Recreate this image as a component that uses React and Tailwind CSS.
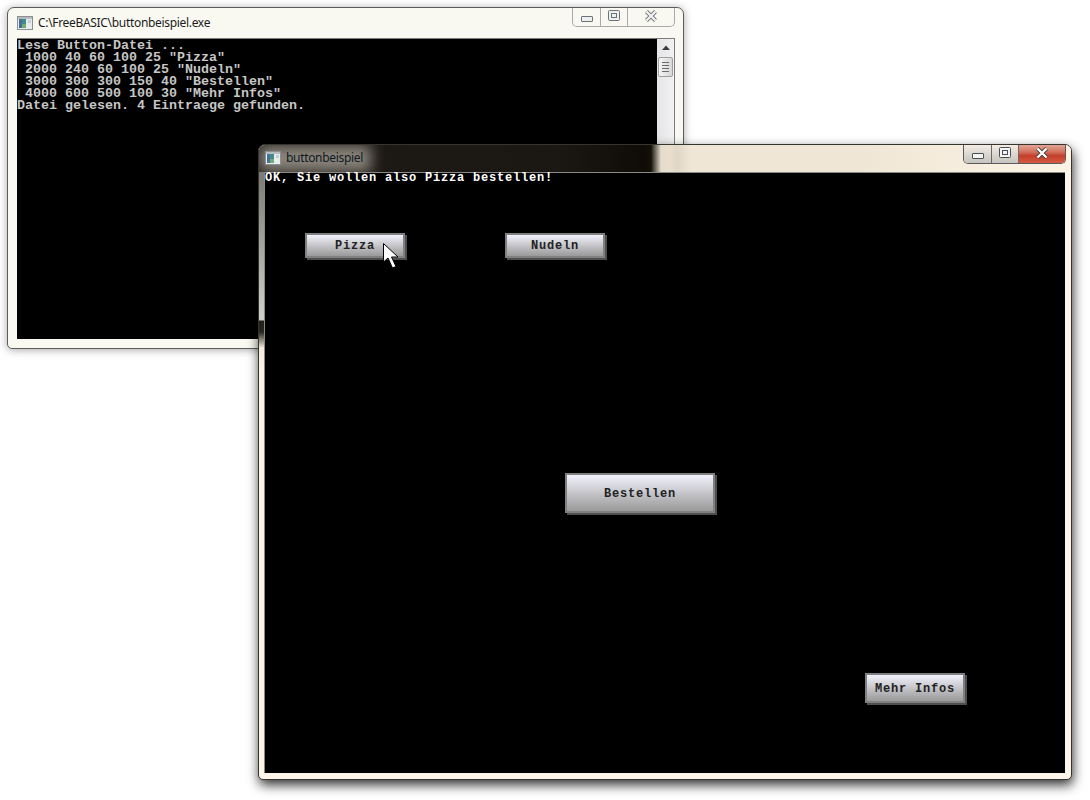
const CONSOLE_LINES = `Lese Button-Datei ...
 1000 40 60 100 25 "Pizza"
 2000 240 60 100 25 "Nudeln"
 3000 300 300 150 40 "Bestellen"
 4000 600 500 100 30 "Mehr Infos"
Datei gelesen. 4 Eintraege gefunden.`;

function WinIcon() {
  return (
    <svg width="16" height="14" viewBox="0 0 16 14" className="shrink-0">
      <rect x="0.5" y="0.5" width="15" height="13" fill="#e8ecec" stroke="#8a9094" />
      <rect x="1" y="1" width="14" height="2" fill="#b4bcc0" />
      <rect x="2" y="3" width="7" height="9" fill="#3f8c8a" />
      <rect x="2" y="3" width="3" height="9" fill="#4a6f96" />
      <rect x="5" y="8" width="4" height="4" fill="#72ad73" />
      <rect x="11" y="4" width="3" height="3" fill="#c4d0d4" />
    </svg>
  );
}

function CaptionButtons({ active }) {
  const glyph = active ? "#f4f4f4" : "#eef0f0";
  const edge = active ? "#4a4f55" : "#6c7278";
  return (
    <div
      className={`flex h-[19px] w-[103px] rounded-b-[5px] border border-t-0 ${
        active ? "border-[#5a5a5a]" : "border-[#a8aaa8]"
      }`}
    >
      <div
        className={`flex w-[28px] items-end justify-center rounded-bl-[4px] border-r pb-[4px] ${
          active
            ? "border-[#6a6a6a] bg-gradient-to-b from-[#f2ece2] to-[#c6c4c0]"
            : "border-[#a8aaa8]"
        }`}
      >
        <div className="h-[6px] w-[12px] rounded-[1px] border" style={{ background: glyph, borderColor: edge }} />
      </div>
      <div
        className={`flex w-[27px] items-start justify-center border-r pt-[2px] ${
          active
            ? "border-[#6a6a6a] bg-gradient-to-b from-[#f2ece2] to-[#c6c4c0]"
            : "border-[#a8aaa8]"
        }`}
      >
        <svg width="12" height="11" viewBox="0 0 12 11">
          <rect x="0.5" y="0.5" width="11" height="10" rx="1" fill={glyph} stroke={edge} />
          <rect x="3.5" y="3.5" width="5" height="4" fill="none" stroke={edge} />
        </svg>
      </div>
      <div
        className={`flex flex-1 items-start justify-center rounded-br-[4px] pt-[2px] ${
          active ? "bg-[linear-gradient(#e2a594_0%,#d2705c_40%,#c33f2a_60%,#d65a42_100%)]" : ""
        }`}
      >
        <svg width="14" height="12" viewBox="0 0 14 12">
          <path d="M2.5 1.5 L11.5 10.5 M11.5 1.5 L2.5 10.5" stroke={active ? "#3a3a3a" : "#6c7278"} strokeWidth="4" />
          <path d="M2.5 1.5 L11.5 10.5 M11.5 1.5 L2.5 10.5" stroke={active ? "#ffffff" : "#f2f2f0"} strokeWidth="2.4" />
        </svg>
      </div>
    </div>
  );
}

function Scrollbar() {
  return (
    <div className="flex w-[17px] shrink-0 flex-col items-center bg-gradient-to-r from-[#e4e4e6] to-[#f2f2f3]">
      <svg width="10" height="6" viewBox="0 0 10 6" className="mt-[6px]">
        <path d="M5 0.5 L9 5 L1 5 Z" fill="#3c3c3c" />
      </svg>
      <div className="mt-[6px] flex h-[20px] w-[15px] flex-col items-center justify-center gap-[2px] rounded-[2px] border border-[#a0a0a0] bg-gradient-to-r from-[#f4f4f4] to-[#d8d8d8]">
        <div className="h-px w-[7px] bg-[#6a6a6a]" />
        <div className="h-px w-[7px] bg-[#6a6a6a]" />
        <div className="h-px w-[7px] bg-[#6a6a6a]" />
        <div className="h-px w-[7px] bg-[#6a6a6a]" />
      </div>
    </div>
  );
}

function GfxButton({ label, className }) {
  return (
    <div
      className={`absolute flex items-center justify-center border-2 border-[#808080] bg-gradient-to-b from-[#f2f2fc] to-[#9a9a9a] pt-px font-['Liberation_Mono',monospace] text-[12px] font-bold tracking-[0.8px] whitespace-pre text-[#222222] shadow-[2px_2px_0_#4e4e4e] ${className}`}
    >
      {label}
    </div>
  );
}

export default function App() {
  return (
    <div className="relative h-[800px] w-[1090px] overflow-hidden bg-white">
      {/* console window */}
      <div className="absolute top-[7px] left-[7px] flex h-[342px] w-[677px] flex-col rounded-t-[7px] rounded-b-[5px] border border-[#5c5c58] bg-[#f9f9f2] shadow-[0_1px_9px_rgba(0,0,0,0.35)]">
        <div className="flex h-[30px] shrink-0 items-start justify-between pr-[8px]">
          <div className="flex items-center gap-[5px] pt-[7px] pl-[9px]">
            <WinIcon />
            <span className="font-['Noto_Sans',sans-serif] text-[12px] leading-[16px] tracking-[-0.32px] text-[#1c1c1c]">
              C:\FreeBASIC\buttonbeispiel.exe
            </span>
          </div>
          <CaptionButtons />
        </div>
        <div className="mr-[8px] mb-[9px] ml-[9px] flex min-h-0 flex-1 border-t border-r border-[#7c7c7c]">
          <pre className="flex-1 bg-black pt-px font-['Liberation_Mono',monospace] text-[13.33px] leading-[12px] font-bold text-[#c6c6c6]">
            {CONSOLE_LINES}
          </pre>
          <Scrollbar />
        </div>
      </div>

      {/* graphics window */}
      <div className="absolute top-[144px] left-[258px] flex h-[636px] w-[814px] flex-col overflow-hidden rounded-t-[7px] rounded-b-[5px] border border-[#36342f] bg-[#fdf5e9] shadow-[1px_5px_12px_rgba(0,0,0,0.8)]">
        <div className="relative flex h-[27px] shrink-0 items-start justify-between bg-[linear-gradient(90deg,#1d1a15_0px,#1b1813_300px,#0f0c07_385px,#141109_392px,#e4dccc_402px,#eadfce_410px,#dfd6c6_418px,#f0e6d6_432px,#efe6d6_600px,#fdf4e6_814px)] pr-[5px]">
          <div className="absolute top-0 left-0 h-[27px] w-[112px] bg-[#8a857c] blur-[7px]" />
          <div className="relative flex items-center gap-[5px] pt-[5px] pl-[6px]">
            <WinIcon />
            <span className="font-['Noto_Sans',sans-serif] text-[12px] leading-[16px] tracking-[-0.32px] text-[#101820]">
              buttonbeispiel
            </span>
          </div>
          <div className="relative">
            <CaptionButtons active />
          </div>
        </div>
        <div className="flex min-h-0 flex-1">
          <div className="w-[5px] shrink-0 bg-[linear-gradient(#7a7a74_0px,#cfcfcb_147px,#c8c8c4_148px,#221e18_149px,#2a261f_160px,#f3ebdc_176px,#fdf5e9_200px)]" />
          <div className="relative flex-1 border-t border-l border-[#8a8a84] bg-black">
            <div className="absolute top-0 left-0 pt-px font-['Liberation_Mono',monospace] text-[12px] leading-[8px] font-bold tracking-[0.8px] whitespace-pre text-white">
              OK, Sie wollen also Pizza bestellen!
            </div>
            <GfxButton label="Pizza" className="top-[60px] left-[40px] h-[25px] w-[100px]" />
            <GfxButton label="Nudeln" className="top-[60px] left-[240px] h-[25px] w-[100px]" />
            <GfxButton label="Bestellen" className="top-[300px] left-[300px] h-[40px] w-[150px]" />
            <GfxButton label="Mehr Infos" className="top-[500px] left-[600px] h-[30px] w-[100px]" />
            <svg width="16" height="26" viewBox="0 0 16 26" className="absolute top-[70px] left-[118px]">
              <path
                d="M0.5 0.5 L0.5 19 L5 15 L9.5 25 L13 23.5 L8.5 14 L15 14 Z"
                fill="#ffffff"
                stroke="#000000"
                strokeWidth="1"
              />
            </svg>
          </div>
          <div className="w-[6px] shrink-0" />
        </div>
        <div className="h-[6px] shrink-0" />
      </div>
    </div>
  );
}
